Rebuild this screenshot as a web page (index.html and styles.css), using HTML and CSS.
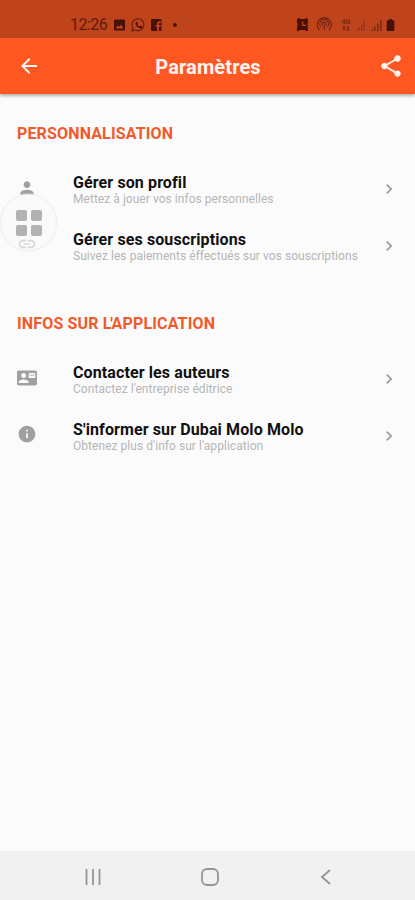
FILE: index.html
```html
<!DOCTYPE html>
<html lang="fr">
<head>
<meta charset="utf-8">
<title>Paramètres</title>
<link rel="stylesheet" href="styles.css">
</head>
<body>
<div class="status">
  <span class="clock">12:26</span>
  <svg class="notifs" width="68" height="16" viewBox="0 0 68 16">
    <path fill-rule="evenodd" d="M2 2.500h9q1 0 1 1v9q0 1-1 1H2q-1 0-1-1v-9q0-1 1-1zM2.500 11.500h8L8 7.500l-2 2.500-1.300-1.500z"/>
    <path class="line" d="M19 13.800l.9-2.800a6 6 0 1 1 2.200 2z"/>
    <path d="M22.800 5.200l1.300-.5.9 1.800-.7 1q.8 1.400 2.300 2l1-.9 1.700.9-.4 1.400q-1 .9-2.700.2-2.500-1.200-3.600-3.800-.4-1.300.2-2.100z"/>
    <path fill-rule="evenodd" d="M39 2h8.500q1 0 1 1v10q0 1-1 1H46V9.700h1.400l.3-1.800H46V6.700q0-.8 1-.8h.9V4.200h-1.600q-2.200 0-2.200 2.200v1.500h-1.500v1.800h1.500V14H39q-1 0-1-1V3q0-1 1-1z"/>
    <circle cx="62" cy="8" r="1.900"/>
  </svg>
  <svg class="system" width="100" height="18" viewBox="0 0 100 18">
    <path fill-rule="evenodd" d="M0 3l2-1.200L3 3h5l1-1.200L11 3v3.500l-.5 1.500.5 5v2H9l-1-1H3l-1 1H0v-2l.5-5L0 6zM5 5.500v4.500h4V8.800H6.300V5.500z"/>
    <path class="line thin" d="M22.500 14a7 7 0 1 1 9.500 0M24 11a4.400 4.400 0 1 1 6.500 0M25.800 9.500a2 2 0 1 1 3 0M27.300 8.500v5"/>
    <text x="44.500" y="8">4G</text>
    <path class="faint" d="M47 10l2 2h-1.300v3h-1.400v-3H45zM51 15l-2-2h1.300v-3h1.400v3H53z"/>
    <path class="dim" d="M59 13h1.400v2H59zM61.500 11H63v4h-1.500zM64 8.500h1.400V15H64zM66.500 5H68v10h-1.500z"/>
    <path class="faint" d="M74.500 13H76v2h-1.500zM77 10.500h1.500V15H77zM80 7.500h1.500V15H80zM83 4h1.600v11H83z"/>
    <path d="M92 3h3v1.300h1.500q.8 0 .8.800V14q0 1-1 1h-5.600q-1 0-1-1V5.100q0-.8.800-.8H92z"/>
  </svg>
</div>
<header class="appbar">
  <svg width="24" height="24" viewBox="0 0 24 24"><path d="M20 11H7.830l5.590-5.590L12 4l-8 8 8 8 1.410-1.410L7.830 13H20z"/></svg>
  <h1>Paramètres</h1>
  <svg width="26" height="26" viewBox="0 0 24 24"><path d="M18 16.080c-.76 0-1.440.3-1.960.77L8.910 12.700c.05-.23.09-.46.09-.7s-.04-.47-.09-.7l7.050-4.110c.54.5 1.250.81 2.040.81 1.660 0 3-1.340 3-3s-1.340-3-3-3-3 1.340-3 3c0 .24.040.47.090.7L8.040 9.810C7.500 9.310 6.790 9 6 9c-1.660 0-3 1.340-3 3s1.340 3 3 3c.79 0 1.500-.31 2.040-.81l7.120 4.160c-.05.21-.08.43-.08.65 0 1.610 1.310 2.920 2.920 2.920s2.920-1.310 2.920-2.920-1.310-2.920-2.920-2.920z"/></svg>
</header>
<main>
  <section>
    <h2 class="wide">PERSONNALISATION</h2>
    <div class="row">
      <svg class="icon" viewBox="0 0 24 24"><path d="M12 12c2.210 0 4-1.790 4-4s-1.790-4-4-4-4 1.790-4 4 1.790 4 4 4zm0 2c-2.670 0-8 1.340-8 4v2h16v-2c0-2.660-5.330-4-8-4z"/></svg>
      <div class="text"><h3>Gérer son profil</h3><p>Mettez à jouer vos infos personnelles</p></div>
      <svg class="chevron" viewBox="0 0 24 24"><path d="M10 6L8.590 7.410 13.170 12l-4.580 4.590L10 18l6-6z"/></svg>
    </div>
    <div class="row">
      <svg class="icon link" viewBox="0 0 24 24"><path d="M3.900 12c0-1.710 1.390-3.100 3.100-3.100h4V7H7c-2.760 0-5 2.240-5 5s2.240 5 5 5h4v-1.900H7c-1.710 0-3.100-1.390-3.100-3.100zM8 13h8v-2H8v2zm9-6h-4v1.900h4c1.710 0 3.100 1.390 3.100 3.100s-1.390 3.100-3.100 3.100h-4V17h4c2.760 0 5-2.240 5-5s-2.240-5-5-5z"/></svg>
      <div class="text"><h3>Gérer ses souscriptions</h3><p>Suivez les paiements éffectués sur vos souscriptions</p></div>
      <svg class="chevron" viewBox="0 0 24 24"><path d="M10 6L8.590 7.410 13.170 12l-4.580 4.590L10 18l6-6z"/></svg>
    </div>
  </section>
  <section>
    <h2 class="wide">INFOS SUR <span class="tight">L'</span>APPLICATION</h2>
    <div class="row">
      <svg class="icon" viewBox="0 0 24 24"><path d="M21 8V7l-3 2-3-2v1l3 2 3-2zm1-5H2C.9 3 0 3.900 0 5v14c0 1.100.9 2 2 2h20c1.100 0 1.990-.9 1.990-2L24 5c0-1.100-.9-2-2-2zM8 6c1.660 0 3 1.340 3 3s-1.340 3-3 3-3-1.340-3-3 1.340-3 3-3zm6 12H2v-1c0-2 4-3.100 6-3.100s6 1.100 6 3.100v1zm8-6h-8V6h8v6z"/></svg>
      <div class="text"><h3>Contacter les auteurs</h3><p>Contactez l'entreprise éditrice</p></div>
      <svg class="chevron" viewBox="0 0 24 24"><path d="M10 6L8.590 7.410 13.170 12l-4.580 4.590L10 18l6-6z"/></svg>
    </div>
    <div class="row">
      <svg class="icon" viewBox="0 0 24 24"><path d="M12 2C6.480 2 2 6.480 2 12s4.480 10 10 10 10-4.480 10-10S17.520 2 12 2zm1 15h-2v-6h2v6zm0-8h-2V7h2v2z"/></svg>
      <div class="text"><h3>S'informer sur Dubai Molo Molo</h3><p>Obtenez plus d'info sur l'application</p></div>
      <svg class="chevron" viewBox="0 0 24 24"><path d="M10 6L8.590 7.410 13.170 12l-4.580 4.590L10 18l6-6z"/></svg>
    </div>
  </section>
</main>
<nav class="navbar">
  <svg width="18" height="18" viewBox="0 0 18 18"><path d="M2.500 1v16M9 1v16M15.500 1v16"/></svg>
  <svg width="18" height="18" viewBox="0 0 18 18"><rect x="1" y="1" width="16" height="16" rx="5"/></svg>
  <svg width="18" height="18" viewBox="0 0 18 18"><path d="M13 2L5 9l8 7"/></svg>
</nav>
<div class="floating"><i></i><i></i><i></i><i></i></div>
</body>
</html>
```
FILE: styles.css
```css
* { box-sizing: border-box; margin: 0; padding: 0; }
body {
  width: 415px;
  height: 900px;
  display: flex;
  flex-direction: column;
  background: #fbfbfb;
  font-family: Roboto, sans-serif;
  overflow: hidden;
  position: relative;
}
.status {
  height: 38px;
  flex: none;
  background: #bf431b;
  display: flex;
  align-items: center;
  padding: 11px 18px 0 70px;
  color: #5c1c0c;
}
.clock { width: 43px; font-size: 16px; line-height: 18px; letter-spacing: -.5px; }
.status svg { fill: #471108; }
.system { margin-left: auto; }
.status .line { fill: none; stroke: #6c200e; stroke-width: 1.300; }
.status .thin { stroke-width: 1.100; }
.status .dim { fill: #97361a; }
.status .faint { fill: #7a2912; }
.status text { font-size: 7px; font-weight: 700; fill: #7a2912; }
.appbar {
  height: 56px;
  flex: none;
  background: #ff5722;
  display: flex;
  align-items: center;
  justify-content: space-between;
  padding: 0 11px 0 17px;
  box-shadow: 0 2px 3px rgba(0, 0, 0, .3);
}
.appbar svg { fill: #fff5ee; }
.appbar h1 {
  font-size: 20px;
  font-weight: 700;
  color: #fff5ee;
  letter-spacing: .12px;
  margin: 2px 3px 0 0;
}
main { flex: 1; padding-top: 29px; }
section { height: 190px; padding-left: 17px; }
h2 {
  height: 37px;
  padding-top: 1px;
  font-size: 16px;
  line-height: 20px;
  font-weight: 700;
  color: #f15a2a;
}
.wide { letter-spacing: .15px; }
.tight { letter-spacing: -1.200px; }
.row { height: 56.500px; display: flex; align-items: center; }
.icon { width: 20px; height: 20px; fill: #a0a0a0; margin-bottom: 1px; }
.link { fill: #c4c4c4; }
.text { width: 300px; margin-left: 36px; white-space: nowrap; padding-top: 4px; }
h3 { font-size: 16px; line-height: 18px; font-weight: 700; color: #111; letter-spacing: .11px; }
p { font-size: 12px; line-height: 14px; color: #b6b6b6; letter-spacing: .045px; }
.chevron { width: 20px; height: 20px; fill: #9c9c9c; margin-left: 6px; margin-top: 2px; }
.navbar {
  height: 49px;
  flex: none;
  background: #f1f1f1;
  display: flex;
  align-items: center;
  justify-content: space-between;
  padding: 3px 80px 0 84px;
}
.navbar svg { fill: none; stroke: #949494; stroke-width: 1.800; }
.floating {
  position: absolute;
  left: 0;
  top: 194px;
  width: 57px;
  height: 57px;
  border-radius: 50%;
  border: 1px solid #efefef;
  background: rgba(250, 250, 250, .35);
  box-shadow: 0 0 2px #eee;
  display: grid;
  grid-template-columns: 11px 11px;
  grid-template-rows: 11px 11px;
  gap: 4px;
  place-content: center;
}
.floating i { background: #b2b2b2; border-radius: 2px; }
```
